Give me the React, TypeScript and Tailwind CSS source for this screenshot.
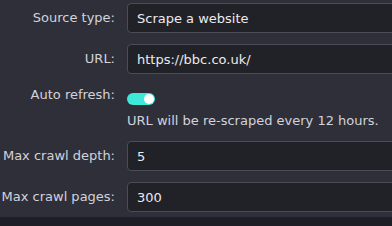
import { useState } from 'react';

const font = { fontFamily: '"DejaVu Sans", Verdana, sans-serif' };

function Field({ label, value }: { label: string; value: string }) {
  return (
    <div className="flex items-center">
      <label className="w-[115px] shrink-0 text-right text-[13px] leading-[16px] text-[#d2d3db]">
        {label}
      </label>
      <input
        type="text"
        defaultValue={value}
        className="ml-[12px] h-[30px] w-[300px] shrink-0 rounded-[4px] border border-[#4b4c55] bg-[#212227] px-[9px] text-[13px] text-[#eaeaf0] outline-none"
        style={font}
      />
    </div>
  );
}

export default function App() {
  const [autoRefresh, setAutoRefresh] = useState(true);

  return (
    <div className="flex h-[226px] w-[392px] flex-col overflow-hidden bg-[#2f2f39]" style={font}>
      <div className="flex-1 pt-[3px]">
        <Field label="Source type:" value="Scrape a website" />
        <div className="mt-[11px]">
          <Field label="URL:" value="https://bbc.co.uk/" />
        </div>

        <div className="mt-[13px] flex items-start">
          <label className="w-[115px] shrink-0 text-right text-[13px] leading-[16px] text-[#d2d3db]">
            Auto refresh:
          </label>
          <div className="ml-[12px] flex flex-col items-start">
            <button
              onClick={() => setAutoRefresh(!autoRefresh)}
              className={`mt-[6px] flex h-[12px] w-[28px] items-center rounded-full p-[1px] ${
                autoRefresh ? 'justify-end bg-[#3fe9d9]' : 'justify-start bg-[#55565f]'
              }`}
            >
              <span className="h-[10px] w-[10px] rounded-full bg-white" />
            </button>
            <p className="mt-[8px] whitespace-nowrap text-[13px] leading-[16px] text-[#d2d3db]">
              URL will be re-scraped every 12 hours.
            </p>
          </div>
        </div>

        <div className="mt-[12px]">
          <Field label="Max crawl depth:" value="5" />
        </div>
        <div className="mt-[11px]">
          <Field label="Max crawl pages:" value="300" />
        </div>
      </div>
      <div className="h-[9px] bg-[#1e1e26]" />
    </div>
  );
}
